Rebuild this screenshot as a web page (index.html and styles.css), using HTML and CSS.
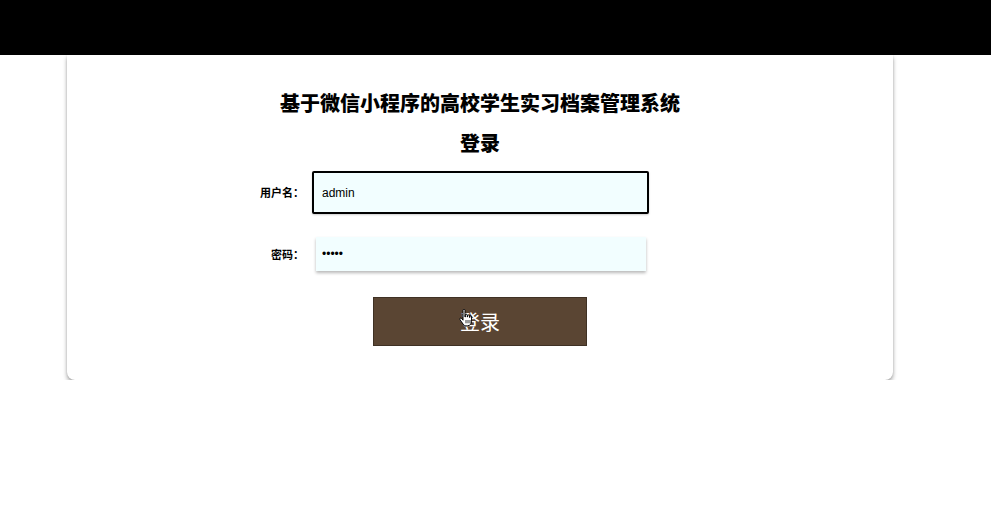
FILE: index.html
```html
<!DOCTYPE html>
<html lang="zh-CN">
<head>
    <meta charset="UTF-8">
    <meta name="viewport" content="width=device-width, initial-scale=1.0">
    <title>登录</title>
    <link rel="stylesheet" href="styles.css">
</head>
<body>
    <header class="topbar"></header>

    <main class="login-card">
        <h1 class="sys-title">基于微信小程序的高校学生实习档案管理系统</h1>
        <h2 class="login-title">登录</h2>

        <form class="login-form" onsubmit="return false">
            <div class="form-row">
                <label class="form-label" for="username">用户名：</label>
                <div class="input-slot">
                    <input id="username" class="form-input is-focus" type="text" value="admin">
                </div>
            </div>

            <div class="form-row">
                <label class="form-label" for="password">密码：</label>
                <div class="input-slot">
                    <input id="password" class="form-input" type="password" value="admin">
                </div>
            </div>

            <div class="form-actions">
                <button class="login-btn" type="submit">登录</button>
                <!-- mouse pointer resting on the button -->
                <svg class="hand-cursor" width="14" height="18" viewBox="0 0 14 18">
                    <path d="M4 1.5c0-.8.5-1.2 1-1.2s1 .4 1 1.2V8h.3V6.2c0-.7.5-1 1-1s1 .3 1 1V8h.3V6.9c0-.7.5-1 1-1s1 .3 1 1V8.5h.2V7.8c0-.6.4-.9.9-.9s.9.3.9.9v4.4c0 2.6-1.6 4.6-4.2 4.6H7.2c-1.4 0-2.3-.6-3.1-1.7L1 10.7c-.4-.6-.3-1.2.2-1.5.5-.3 1.1-.1 1.5.4L4 11.2z" fill="#fff" stroke="#000" stroke-width="1"/>
                    <path d="M7 11v3.3M9 11v3.3M11 11v3.3" stroke="#000" stroke-width=".8"/>
                </svg>
            </div>
        </form>
    </main>
</body>
</html>
```

FILE: styles.css
```css
body {
    margin: 0;
    padding: 0;
    background-color: #fff;
    font-family: "Liberation Sans", "Noto Sans CJK SC", sans-serif;
    color: #000;
}
.topbar {
    height: 55px;
    background-color: #000;
}
.login-card {
    width: 826px;
    margin-left: 67px;
    padding: 33px 0 34px;
    box-sizing: border-box;
    background-color: #fff;
    border-radius: 0 0 8px 8px;
    box-shadow: 0 3px 4px rgba(0, 0, 0, 0.35), 0 0 2px rgba(0, 0, 0, 0.12);
}
.sys-title {
    margin: 0;
    font-family: "Noto Sans CJK SC", sans-serif;
    font-size: 20px;
    line-height: 30px;
    font-weight: 900;
    text-align: center;
}
.login-title {
    margin: 10px 0 0;
    font-family: "Noto Sans CJK SC", sans-serif;
    font-size: 20px;
    line-height: 30px;
    font-weight: 900;
    text-align: center;
}
.login-form {
    margin-top: 17px;
    display: flex;
    flex-direction: column;
    gap: 28px;
}
.form-row {
    display: flex;
    align-items: center;
    gap: 12px;
    padding-left: 137px;
}
.form-label {
    width: 100px;
    text-align: right;
    font-family: "Noto Sans CJK SC", sans-serif;
    font-size: 11px;
    font-weight: 700;
}
.input-slot {
    width: 330px;
    height: 34px;
    display: flex;
}
.form-input {
    width: 100%;
    height: 100%;
    box-sizing: border-box;
    padding: 0 6px;
    border: none;
    outline: none;
    background-color: #f2feff;
    font-family: "Liberation Sans", sans-serif;
    font-size: 12px;
    color: #000;
    box-shadow: 0 2px 3px rgba(0, 0, 0, 0.28);
}
.form-input.is-focus {
    width: 337px;
    height: 43px;
    margin: -4px -3px -5px -4px;
    padding: 0 8px;
    border: 2px solid #000;
    border-radius: 2px;
    box-shadow: 0 1px 2px rgba(0, 0, 0, 0.2);
}
.form-actions {
    position: relative;
    display: flex;
    justify-content: center;
    margin-top: -2px;
}
.login-btn {
    width: 214px;
    height: 49px;
    border: 1px solid #3f3124;
    background-color: #5a4533;
    color: #fff;
    font-family: "Noto Sans CJK SC", sans-serif;
    font-size: 20px;
    cursor: pointer;
}
.hand-cursor {
    position: absolute;
    left: 392px;
    top: 12px;
}
```
